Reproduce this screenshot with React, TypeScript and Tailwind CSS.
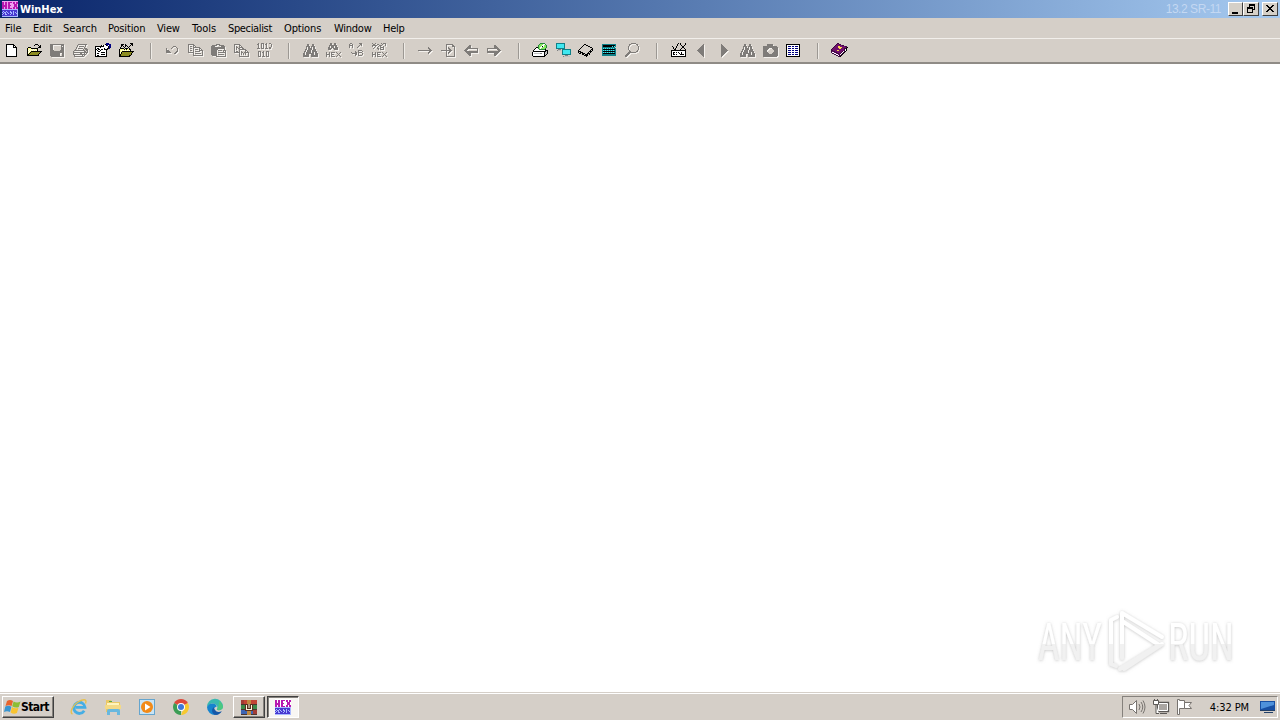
import type { ReactNode } from 'react';

type Glyph = { rows: string[]; disabled?: boolean };

const COLORS: Record<string, string> = {
  k: '#000000',
  w: '#ffffff',
  y: '#ffff8c',
  d: '#8c8c20',
  g: '#808080',
  s: '#c0c0c0',
  b: '#000080',
  c: '#40e8f0',
  t: '#108088',
  l: '#86e860',
  e: '#288838',
  p: '#70106c',
  q: '#3c0840',
  o: '#ffd850',
  m: '#b818b0',
  v: '#4838d0',
  i: '#f0a0f0',
  a: '#a8b8ff',
};

// Bitmap icons, one character per pixel
function PixelIcon({ rows, disabled }: Glyph) {
  const runs: { x: number; y: number; w: number; c: string }[] = [];
  rows.forEach((row, y) => {
    let x = 0;
    while (x < row.length) {
      let end = x + 1;
      while (end < row.length && row[end] === row[x]) end++;
      if (row[x] !== '.') runs.push({ x, y, w: end - x, c: row[x] });
      x = end;
    }
  });
  return (
    <svg width="17" height="17" viewBox="0 0 17 17" shapeRendering="crispEdges" className="block shrink-0">
      {disabled &&
        runs.map((r, i) => <rect key={i} x={r.x + 1} y={r.y + 1} width={r.w} height="1" fill="#f4f1ed" />)}
      {runs.map((r, i) => (
        <rect key={i} x={r.x} y={r.y} width={r.w} height="1" fill={disabled ? '#7f7c79' : COLORS[r.c]} />
      ))}
    </svg>
  );
}

const BINOCULARS = [
  '',
  '.....kk...kk',
  '.....kk...kk',
  '....kkkk.kkkk',
  '....k.kk.k.kk',
  '....k.kkkk.kk',
  '...kk.kkkk.kkk',
  '...k.kkkk.kkkk',
  '..kk.kkkk.kkkkk',
  '..k.kkkkk.kk.kk',
  '.kk.kkkkkkkk.kkk',
  '.kk.kkk..kkk.kkk',
  '.kkkkkk..kkkkkkk',
  '.kkkkkk..kkkkkkk',
];

const TOOLBAR: (Glyph | null)[] = [
  { rows: [
    '', '...kkkkkkkk', '...kwwwwwwkk', '...kwwwwwwkwk', '...kwwwwwwkkkk', '...kwwwwwwwwwk', '...kwwwwwwwwwk',
    '...kwwwwwwwwwk', '...kwwwwwwwwwk', '...kwwwwwwwwwk', '...kwwwwwwwwwk', '...kwwwwwwwwwk', '...kwwwwwwwwwk', '...kkkkkkkkkkk',
  ] },
  { rows: [
    '', '.........kkk', '........k...k.k', '.............kk', '..kkk.......kkk', '.kyyykkkkkkk', '.kywywywywyk', '.kwywywywywk',
    '.kywykkkkkkkkkkk', '.kwykdddddddddk', '.kykdddddddddk', '.kkdddddddddk', '.kkkkkkkkkkkk',
  ] },
  { disabled: true, rows: [
    '', '.kkkkkkkkkkkkkk', '.kkk........kkk', '.kkk........k.k', '.kkk........kkk', '.kkk........kkk', '.kkk........kkk', '.kkkk......kkkk',
    '.kkkkkkkkkkkkkk', '.kkkkkkkkkkkkkk', '.kkkkkkkkkk..kk', '.kkkkkkkkkk..kk', '.kkkkkkkkkk..kk', '..kkkkkkkkkkkkk',
  ] },
  { disabled: true, rows: [
    '', '......kkkkkkkkk', '.....k.......k', '.....k.kkkkk.k', '....k.......k', '....k.kkkkk.kkk', '...k.......k.kkk', '..kkkkkkkkkkk.kk',
    '.k..........kk.k', '.kkkkkkkkkkkkkkk', '.k......kk..k.k', '.kkkkkkkkkkkkk', '..k.......k.k', '..kkkkkkkkkk',
  ] },
  { rows: [
    '...........bbb', '..........kbbbbb', '......kwkwwkbwbb', 'kkkkkkkkkwwwwkbb', 'kwwwwkwwwwwwwkbb', 'kwkkwwwwwkwwkkb', 'kkwkkwkkwkkkk', 'kwkwwkwwwwwk',
    'kwwkkwwwwwwk', 'kwwwwwkkkkwk', 'kwkkwwwwwwwk', 'kwwwwwkkkkwk', 'kwkkwwwwwwwk', 'kkkkkkkkkkkk',
  ] },
  { rows: [
    '............kkk', '...kkk.k.....kk', '...kk..kk...k.k', '...k.k.k.k.k', '..k...k...k', '..kkkk.kkk.k', '.kyyyykykyykk', '.kywywywywywk',
    '.kyykkkkkkkkkkkk', '.kwkddddddddddk', '.kykdddddddddk', '.kkddddddddddk', '.kkddddddddkk', '.kkkkkkkkkkk',
  ] },
  null,
  { disabled: true, rows: ['', '', '', '.........kkk', '........k...k', '..k....k.....k', '..k..........k', '..kkk........k', '..kkkk......kk', '..kkkkk....kk', '..........kk'] },
  { disabled: true, rows: [
    '', '.kkkkkk', '.k....kk', '.k.kk.k.k', '.k....kkkkkkk', '.k.kk.k.....kk', '.k....k.kkk.k.k', '.k.kk.k.....kkkk',
    '.k....k.kkkkk..k', '.kkkkkk........k', '......k.kkkkkk.k', '......k........k', '......kkkkkkkkkk',
  ] },
  { disabled: true, rows: [
    '', '......kkkk', '..kkkkk..kkkkk', '.kkkk......kkkk', '.kkkkkkkkkkkkkk', '.kkkkkkkkkkkkkk', '.kkkkkkk......k', '.kkkkkk.kkkk.kkk',
    '.kkkkkk......k.k', '.kkkkkk.kkkkkkkk', '.kkkkkk........k', '.kkkkkk.kkkkkk.k', '..kkkkk........k', '......kkkkkkkkkk',
  ] },
  { disabled: true, rows: [
    '', '.kkkkkk', '.k....kk', '.k.k..k.k', '.k.kk.kkkk', '.k.k.kk..kk', '.k.k..kkkkkkk', '.k....k.....kk',
    '.k.kk.k.k...k.k', '.kkkkkk.kk.kkkkk', '......k.k.k.k..k', '......k.k.k.k..k', '......k........k', '......kkkkkkkkkk',
  ] },
  { disabled: true, rows: [
    '..k..kkk..k..kk', '.kk..k.k.kk....k', '..k..k.k..k....k', '..k..k.k..k....k', '..k..k.k..k..kk', '.kkk.kkk.kkk.kk', '', '',
    '..kkk..k..kkk', '..k.k.kk..k.k', '..k.k..k..k.k', '..k.k..k..k.k', '..k.k..k..k.k', '..kkk.kkk.kkk',
  ] },
  null,
  { disabled: true, rows: BINOCULARS },
  { disabled: true, rows: [
    '.....kk..kk', '.....kk..kk', '....kkkkkkkk', '....k.kkk.kk', '...kk.kkk.kkk', '...kkkk.kkkkk', '...kkk...kkkk', '',
    '.k..k.kkkk.k...k', '.k..k.k.....k.k', '.kkkk.kkk....k', '.k..k.k.....k.k', '.k..k.kkkk.k...k',
  ].flatMap((row, i) => (i === 7 ? ['', ''] : [row])) },
  { disabled: true, rows: [
    '..kk.......kkk', '.k..k.......kk', '.kkkk......k.k', '.k..k.....k', '.k..k....k', '', '', '..........kkkk',
    '.......k..k...k', '...k...kk.kkkk', '....kkkkk.k...k', '.......kk.k...k', '.......k..kkkk',
  ] },
  { disabled: true, rows: [
    '.k..k.....k.kkk', '..kk..kk...k..k', '.kkkkk..kkk...k', '.k..k..k.k..k', '...k..k..kkkk', '..k...kk.k..k', '.......k.kkkk', '', '',
    '.k..k.kkkk.k...k', '.k..k.k.....k.k', '.kkkk.kkk....k', '.k..k.k.....k.k', '.k..k.kkkk.k...k',
  ] },
  null,
  { disabled: true, rows: ['', '', '', '', '...........k', '...........kk', '............kk', '.kkkkkkkkkkkkkk', '............kk', '...........kk', '...........k'] },
  { disabled: true, rows: [
    '', '......kkkkkkk', '......k.....kk', '......k.....kkk', '......k.k.....k', '......k.kk....k', '......k..kk...k', '.kkkkkkkkkkk..k',
    '......k..kk...k', '......k.kk....k', '......k.k.....k', '......k.......k', '......k.......k', '......kkkkkkkkk',
  ] },
  { disabled: true, rows: ['', '', '......kk', '.....kkk', '....kkkk', '...kkkkkkkkkkkk', '..kkk.........k', '.kkk..........k', '..kkkkkkkkkkkkk', '...kkkkkkkkkkkk', '....kkkk', '.....kkk', '......kk'] },
  { disabled: true, rows: ['', '', '........kk', '........kkk', '........kkkk', '.kkkkkkkkkkkk', '.k.........kkk', '.k..........kkk', '.kkkkkkkkkkkkk', '.kkkkkkkkkkkk', '........kkkk', '........kkk', '........kk'] },
  null,
  { rows: [
    '........eeeee', '.......elllwwe', '......elllwwlle', '......ellwkwlle', '....kkelwwlllle', '...kwwelwlllle', '..kwwwweeeeeek', '.kwwwwwwwwwwwkkk',
    '.kkkkkkkkkkkkksk', 'kwwwwwwwwwwwkssk', 'kwssssssggwwkssk', 'kwwwwwwwwwwwksk', 'kwwwwwwwwwwwkk', '.kkkkkkkkkkkk',
  ] },
  { rows: [
    '.ttttttttt', '.tccccccct', '.tccccccct', '.tccccccct', '.tccccccct', '.ttttttttt.', '...ggg.ttttttttt', '..gsss.tccccccct',
    '.......tccccccct', '.......tccccccct', '.......tccccccct', '.......ttttttttt', '..........ggg', '........gssssss',
  ] },
  { rows: [
    '', '......kk', '.....k..kk', '....k.....kk', '...k........kk', '..k...........k', '.k...........kk', 'k...........k.k',
    'kkk........kkk', 'k.kkk.....k.k', '.kk.kkk..kkk', '....kk.kkk.k', '......kkkk', '........k',
  ] },
  { rows: [
    '', '.tttttttttttttt', '.tkkkkkkkkkkkkt', '.tkkkkkkkkkckct', '.ttttttttttttt', '.tctctctctctctt', '.tkkkkkkkkkkkkt', '.tctctctctctctt',
    '.tkkkkkkkkkkkkt', '.tctctctctctctt', '.tkkkkkkkkkkkkt', '.tttttttttttttt', '.tttttttttttttt',
  ] },
  { disabled: true, rows: [
    '.......kkkkk', '.....kk.....kk', '.....k.......k', '....k.........k', '....k.........k', '....k.........k', '....k.........k', '.....k.......k',
    '.....kk.....kk', '....kkkkkkkk', '...kkk', '..kkk', '.kkk', '.kk',
  ] },
  null,
  { rows: [
    '........k.k....k', '.......k..k....k', '.......k...k..k', '..k...k.....kk', '...k..k.....kk', '...k.k.....k..k', '....kk....k....k', '.kkkkkkkkkkkkkkk',
    '.kwwwwwwwwwwwwwk', '.kwkkwkwkwwkwwwk', '.kwkwwwwwkwkwwwk', '.kwkkwkwwwkkkkwk', '.kwwwwwwwwwwwwwk', '.kkkkkkkkkkkkkkk',
  ] },
  { disabled: true, rows: ['', '..........k', '.........kk', '........kkk', '.......kkkk', '......kkkkk', '.....kkkkkk', '....kkkkkkk', '.....kkkkkk', '......kkkkk', '.......kkkk', '........kkk', '.........kk', '..........k'] },
  { disabled: true, rows: ['', '.....k', '.....kk', '.....kkk', '.....kkkk', '.....kkkkk', '.....kkkkkk', '.....kkkkkkk', '.....kkkkkk', '.....kkkkk', '.....kkkk', '.....kkk', '.....kk', '.....k'] },
  { disabled: true, rows: BINOCULARS },
  { disabled: true, rows: [
    '', '.....kkkkkk', '.....kkkkkk', '.kkkkkkkkkkkkkk', '.kkkkkkkkkkkkkkk', '.kkkkkk...kkkkkk', '.kkkkk.....kkkkk', '.kkkk.......kkkk', '.kkkk.......kkkk',
    '.kkkkk.....kkkkk', '.kkkkkk...kkkkkk', '.kkkkkkkkkkkkkkk', '.kkkkkkkkkkkkkkk', '.kkkkkkkkkkkkkk',
  ] },
  { rows: [
    '', '.kkkkkkkkkkkkkk', '.kwwwwwwwwwwwwk', '.kwbbbwbbwbbbwk', '.kwwwwwwwwwwwwk', '.kwbbbwbbwbbbwk', '.kwwwwwwwwwwwwk', '.kwbbbwbbwbbbwk', '.kwwwwwwwwwwwwk',
    '.kwbbbwbbwbbbwk', '.kwwwwwwwwwwwwk', '.kwbbbwbbwbbbwk', '.kwwwwwwwwwwwwk', '.kkkkkkkkkkkkkk',
  ] },
  null,
  { rows: [
    '......qq', '.....qppqq', '....qppppppqq', '...qpppoopppppqq', '..qppppooooppppqk', '.qppppppoopppqqk', 'qppppppppppppqwk', 'qqppppoopppppqwk',
    'qpqqpppppppqwqk', 'qwwpqqppppqwqk', '.qqwwpqqpqwqk', '...qqwwpqwqk', '.....qqwqqk', '.......qqk',
  ] },
];

const HEX_ROWS = [
  'iiiiiiiiiiiiiiii', 'mmimmimmmmimmimm', 'mmimmimmiiimmimm', 'mmimmimmiiiimmmi', 'mmmmmimmmiiimmmi', 'mmmmmimmiiiimmmi', 'mmimmimmiiimmimm', 'mmimmimmmmimmimm',
  'aaaaaaaaaaaaaaaa', 'vvvvvvvvvvvvvvva', 'vavvavvvavvavvva', 'avaavavvaavavava', 'vavavvavvavavvaa', 'avvaavvvavvavvva', 'vvvvvvvvvvvvvvva', 'aaaaaaaaaaaaaaaa',
];

const MENU = [
  { label: 'File', cls: 'w-[28px]' },
  { label: 'Edit', cls: 'w-[30px]' },
  { label: 'Search', cls: 'w-[45px]' },
  { label: 'Position', cls: 'w-[49px] tracking-[-0.15px]' },
  { label: 'View', cls: 'w-[35px] tracking-[-0.2px]' },
  { label: 'Tools', cls: 'w-[36px]' },
  { label: 'Specialist', cls: 'w-[56px] tracking-[-0.35px]' },
  { label: 'Options', cls: 'w-[50px] tracking-[-0.15px]' },
  { label: 'Window', cls: 'w-[49px] tracking-[-0.25px]' },
  { label: 'Help', cls: 'w-[30px] tracking-[-0.3px]' },
];

function CaptionButton({ children, className = '' }: { children: ReactNode; className?: string }) {
  return (
    <button
      className={`h-[14px] border border-t-white border-l-white border-r-[#404040] border-b-[#404040] bg-[#d5d0c8] ${className}`}
    >
      <svg width="13" height="12" viewBox="0 0 13 12" shapeRendering="crispEdges" className="block">
        {children}
      </svg>
    </button>
  );
}

function TitleBar() {
  return (
    <div className="flex h-[18px] items-center bg-linear-to-r from-[#0a246a] to-[#a6caf0] pr-[2px] pl-[2px]">
      <div className="h-4">
        <PixelIcon rows={HEX_ROWS} />
      </div>
      <span className="ml-px pt-px text-[11px] leading-[17px] font-bold text-white">WinHex</span>
      <span className="mr-[7px] ml-auto pt-px font-['Liberation_Sans',sans-serif] text-[12px] leading-[17px] tracking-[-0.45px] text-[#c4d8f2]">
        13.2 SR-11
      </span>
      <CaptionButton className="w-[15px]">
        <rect x="3" y="9" width="6" height="2" />
      </CaptionButton>
      <CaptionButton className="w-4">
        <path d="M5 1h6v2h-6zM5 3h1v2h-1zM10 3h1v4h-3v-1h2zM3 4h6v2h-6zM3 6h1v4h-1zM8 6h1v4h-1zM3 9h6v1h-6z" />
      </CaptionButton>
      <CaptionButton className="ml-[3px] w-4">
        <path d="M3 2h2v1h1v1h2v-1h1v-1h2v1h-1v1h-1v1h-1v1h1v1h1v1h1v1h-2v-1h-1v-1h-2v1h-1v1h-2v-1h1v-1h1v-1h1v-1h-1v-1h-1v-1h-1z" />
      </CaptionButton>
    </div>
  );
}

function MenuBar() {
  return (
    <div className="flex h-5 pt-px pl-[5px]">
      {MENU.map((item) => (
        <span key={item.label} className={`shrink-0 text-[11px] leading-5 whitespace-nowrap ${item.cls}`}>
          {item.label}
        </span>
      ))}
    </div>
  );
}

function Toolbar() {
  return (
    <div className="flex h-[26px] border-t border-b-2 border-t-[#f2efeb] border-b-[#8f8b86] pt-1 pl-[3px]">
      {TOOLBAR.map((icon, i) => (
        <div key={i} className="w-[23px] shrink-0">
          {icon ? <PixelIcon {...icon} /> : <div className="ml-[9px] h-4 w-[2px] border-r border-l border-r-[#eeebe6] border-l-[#9c9893]" />}
        </div>
      ))}
    </div>
  );
}

function Watermark() {
  return (
    <svg width="240" height="84" viewBox="0 0 240 84" className="absolute right-[12px] bottom-[6px]">
      <defs>
        <filter id="soft" x="-10%" y="-10%" width="120%" height="125%">
          <feDropShadow dx="0" dy="0.5" stdDeviation="1.7" floodColor="#888888" floodOpacity="0.5" />
        </filter>
        <linearGradient id="half" gradientUnits="userSpaceOnUse" x1="0" y1="0" x2="0" y2="84">
          <stop offset="0.5" stopColor="#ffffff" />
          <stop offset="0.5" stopColor="#f1f1f1" />
        </linearGradient>
      </defs>
      <g filter="url(#soft)" fill="url(#half)" fontFamily="Roboto, sans-serif" fontSize="51">
        <text x="10" y="58" textLength="64" lengthAdjust="spacingAndGlyphs">ANY</text>
        <text x="140" y="58" textLength="66" lengthAdjust="spacingAndGlyphs">RUN</text>
      </g>
      <g filter="url(#soft)" fill="none" stroke="url(#half)" strokeWidth="4" strokeLinejoin="round" strokeLinecap="round">
        <path d="M89 15L83 18V62L88 64" />
        <path d="M94 56V11L134 35M94 19L131 43L92 67M134 42L96 67" />
      </g>
    </svg>
  );
}

function WindowsLogo() {
  return (
    <svg width="17" height="16" viewBox="0 0 17 16" className="block">
      <path d="M3 2Q6 0 9 2L7.6 7Q5 5.6 1.5 7Z" fill="#e8642c" />
      <path d="M9.6 2.5Q13 4.5 16.5 2.5L14.8 8Q11.5 9.5 8.2 7.3Z" fill="#8cbe35" />
      <path d="M1.3 7.6Q4.5 6.1 7.4 7.7L6 13Q3 11.5 0 13Z" fill="#3995d0" />
      <path d="M8 8.1Q11 10.1 14.5 8.7L12.9 14Q9.7 15.8 6.6 13.4Z" fill="#f8c431" />
    </svg>
  );
}

function QuickLaunch() {
  return (
    <div className="ml-[16px] flex items-center gap-4">
      <svg width="18" height="18" viewBox="0 0 18 18">
        <path d="M14.2 12.8A5.6 5.6 0 1 1 15 9.4H5.5" fill="none" stroke="#46aee4" strokeWidth="2.8" />
        <path d="M2.5 16C-1 14.5 3 7 8 4S17.5 0.5 15.5 5.5" fill="none" stroke="#e7c04e" strokeWidth="1.4" />
      </svg>
      <svg width="18" height="18" viewBox="0 0 18 18">
        <path d="M2 2h5l1 2h8v10H2z" fill="#eac867" />
        <path d="M3 5h12v6H3z" fill="#fff4bc" />
        <path d="M5 3h3v1H5z" fill="#58a848" />
        <path d="M1 7h16v4H1z" fill="#f4da87" />
        <path d="M3 17v-4q0-2 2-2h9q2 0 2 2v4h-3v-3H6v3z" fill="#68b8df" />
      </svg>
      <svg width="18" height="18" viewBox="0 0 18 18">
        <rect x="1.5" y="1.5" width="15" height="15" fill="#c9e4f5" stroke="#65a5ce" />
        <circle cx="9" cy="9" r="6" fill="#f28a18" />
        <path d="M7 5.5L12.5 9L7 12.5z" fill="#fff" />
      </svg>
      <svg width="18" height="18" viewBox="0 0 18 18">
        <path d="M9 9L2.1 5A8 8 0 0 1 15.9 5z" fill="#dd493b" />
        <path d="M9 9V17A8 8 0 0 1 2.1 5z" fill="#3c9d55" />
        <path d="M9 9L15.9 5A8 8 0 0 1 9 17L12 10z" fill="#f7c92f" />
        <circle cx="9" cy="9" r="4" fill="#fff" />
        <circle cx="9" cy="9" r="3" fill="#3d78da" />
      </svg>
      <svg width="18" height="18" viewBox="0 0 18 18">
        <path d="M1 9A8 8 0 0 1 17 8.5C17 12 13 12.8 10.8 11.8C13 8 9 4.5 5 5.8Q2 7 1 9" fill="#39b8b0" />
        <path d="M13 3A8 8 0 0 1 17 8.5C17 12 13 12.8 10.8 11.8C12.5 9 13 6 13 3" fill="#4cc880" />
        <path d="M10.8 8.5C10 4.5 3 4.5 1 9A8 8 0 0 0 10 17C6 15 6 10 10.8 8.5Z" fill="#1684ce" />
        <path d="M8 9C4 12 7 17 10 17Q14 16.5 15.8 13.2Q11 15 9 12Q8 10.5 8 9Z" fill="#1558a8" />
      </svg>
    </div>
  );
}

function RarIcon() {
  return (
    <svg width="18" height="17" viewBox="0 0 18 17" className="block">
      <path d="M1 1h16v5H1z" fill="#c24434" />
      <path d="M1 6h16v5H1z" fill="#3c8a48" />
      <path d="M1 11h16v5H1z" fill="#3d64b4" />
      <path d="M1 5h16v1H1zM1 10h16v1H1zM1 15h16v1H1z" fill="#4a3530" />
      <path d="M7 1h4v15H7z" fill="#c08a40" />
      <path d="M13 11h4v4h-4zM1 1h3v4H1z" fill="#a03c34" />
      <path d="M5 5h8v7H5z" fill="#57301f" />
      <path d="M6 6h1v4h4V6h1v5H6zM8.5 5h1v4h-1z" fill="#fff5de" />
    </svg>
  );
}

function Tray() {
  return (
    <div className="mt-px mr-[2px] ml-auto flex h-[22px] items-center border border-t-[#85817c] border-l-[#85817c] border-r-white border-b-white pl-[5px]">
      <svg width="18" height="18" viewBox="0 0 18 18" fill="none" stroke="#77736f">
        <path d="M1.5 6.5h3l4-4v13l-4-4h-3z" fill="#fff" />
        <path d="M11 6q2 3 0 6M13 4q3.5 5 0 10M15 2.5q4 6.5 0 13" />
      </svg>
      <svg width="18" height="18" viewBox="0 0 18 18" className="ml-[6px]" fill="none" stroke="#5b5855">
        <path d="M5.5 4.5h11v9h-11z" fill="#aaa6a2" strokeWidth="1.3" />
        <path d="M6.5 5.5h9v7h-9z" stroke="#fff" />
        <path d="M1.5 2.5h5v4h-5zM2.5 1v2M5.5 1v2M4 7v8.5h3" fill="#fff" />
        <path d="M8 15.5h7" />
      </svg>
      <svg width="18" height="18" viewBox="0 0 18 18" className="ml-[5px]" fill="#fff" stroke="#77736f">
        <path d="M2.5 1.5v15h2V10.5h5V2.5H4.5V1.5z" />
        <path d="M9.5 4.5h7l-2.5 3l2.5 3h-7z" />
      </svg>
      <span className="ml-[17px] pt-px text-[11px] leading-5 tracking-[-0.1px] whitespace-nowrap">4:32 PM</span>
      <svg width="17" height="14" viewBox="0 0 17 14" className="ml-[11px]">
        <path d="M0 1h15v9H0z" fill="#174fa3" />
        <path d="M1 2h13v3L1 9z" fill="#4e91db" />
        <path d="M0 10h15v1H0zM4 12h9v1H4z" fill="#203f68" />
      </svg>
    </div>
  );
}

function Taskbar() {
  return (
    <div className="flex h-7 items-center border-t border-[#d5cfc8] bg-[#d5cfc8] shadow-[inset_0_1px_0_#ffffff]">
      <button className="mt-px ml-[2px] flex h-[22px] w-[52px] items-center border border-t-white border-l-white border-r-[#404040] border-b-[#404040] pl-px shadow-[inset_-1px_-1px_0_#85817c]">
        <WindowsLogo />
        <span className="pb-px text-[12px] leading-5 font-bold tracking-[-0.55px]">Start</span>
      </button>
      <QuickLaunch />
      <button className="mt-px ml-[9px] flex h-[22px] w-8 items-center justify-center border border-t-white border-l-white border-r-[#404040] border-b-[#404040] shadow-[inset_-1px_-1px_0_#85817c]">
        <RarIcon />
      </button>
      <button className="mt-px ml-[2px] flex h-[22px] w-8 items-center justify-center border border-t-[#404040] border-l-[#404040] border-r-white border-b-white bg-[#f8f6f3] pt-px shadow-[inset_1px_1px_0_#85817c]">
        <PixelIcon rows={HEX_ROWS.map((row) => row.replace(/i/g, 'w'))} />
      </button>
      <Tray />
    </div>
  );
}

export default function App() {
  return (
    <div className="flex h-[720px] w-[1280px] flex-col overflow-hidden bg-[#d5cfc8] font-['DejaVu_Sans_Condensed','DejaVu_Sans',sans-serif] text-black [font-stretch:condensed]">
      <TitleBar />
      <MenuBar />
      <Toolbar />
      <main className="relative flex-1 bg-white">
        <Watermark />
      </main>
      <Taskbar />
    </div>
  );
}
